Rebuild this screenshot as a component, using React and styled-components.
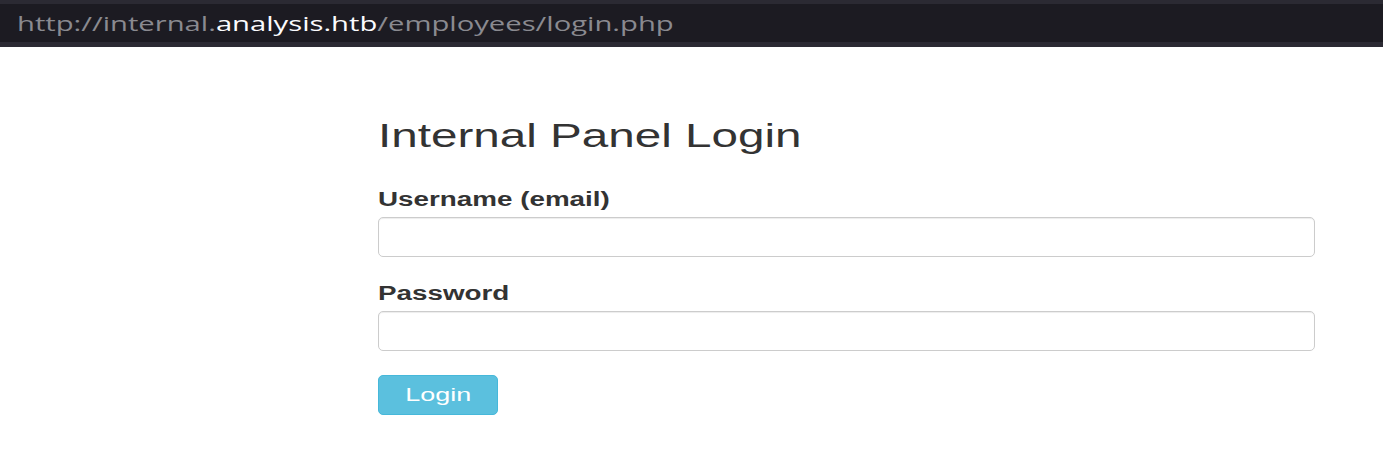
import styled, { createGlobalStyle } from 'styled-components';

const GlobalStyle = createGlobalStyle`
  html, body {
    margin: 0;
    padding: 0;
    background: #ffffff;
  }
  * {
    box-sizing: border-box;
  }
`;

const Page = styled.div`
  width: 1383px;
  height: 465px;
  overflow: hidden;
  background: #ffffff;
`;

// the screenshot is stretched sideways, so text gets a horizontal scale
const Wide = styled.span`
  display: inline-block;
  white-space: nowrap;
  transform: scaleX(${(p) => p.$x || 1.4});
  transform-origin: ${(p) => (p.$center ? 'center' : 'left')} center;
`;

const AddressBar = styled.div`
  height: 47px;
  background: #1c1b22;
  border-top: 4px solid #2b2a33;
  border-bottom: 5px solid #2b2a33;
  display: flex;
  align-items: center;
  padding-left: 17px;
  font-family: "Open Sans", "DejaVu Sans", sans-serif;
  font-size: 20px;
  color: #8a8a90;
  white-space: nowrap;
`;

const Host = styled.span`
  color: #fbfbfe;
`;

const Main = styled.div`
  padding: 68px 0 0 378px;
  width: 1315px;
  font-family: "Liberation Sans", Arial, sans-serif;
  color: #333333;
`;

const Title = styled.h3`
  margin: 0 0 33px;
  font-size: 34px;
  font-weight: 400;
  line-height: 40px;
`;

const Field = styled.div`
  margin-bottom: 25px;
`;

const Label = styled.label`
  display: block;
  font-size: 20px;
  font-weight: 700;
  line-height: 22px;
  margin-bottom: 7px;
`;

const Input = styled.input`
  display: block;
  width: 100%;
  height: 40px;
  padding: 6px 12px;
  border: 1px solid #cccccc;
  border-radius: 5px;
  box-shadow: inset 0 1px 1px rgba(0, 0, 0, 0.075);
  font-size: 19px;
  outline: none;
`;

const Button = styled.button`
  margin-top: -1px;
  width: 120px;
  height: 40px;
  padding: 0;
  background: #5bc0de;
  border: 1px solid #46b8da;
  border-radius: 5px;
  color: #ffffff;
  font-family: "Liberation Sans", Arial, sans-serif;
  font-size: 19px;
  cursor: pointer;
`;

export default function App() {
  return (
    <Page>
      <GlobalStyle />
      <AddressBar>
        <Wide $x={1.46}>
          http://internal.<Host>analysis.htb</Host>/employees/login.php
        </Wide>
      </AddressBar>
      <Main>
        <Title>
          <Wide $x={1.4}>Internal Panel Login</Wide>
        </Title>
        <form>
          <Field>
            <Label htmlFor="username">
              <Wide $x={1.39}>Username (email)</Wide>
            </Label>
            <Input id="username" type="text" />
          </Field>
          <Field>
            <Label htmlFor="password">
              <Wide $x={1.39}>Password</Wide>
            </Label>
            <Input id="password" type="password" />
          </Field>
          <Button type="submit">
            <Wide $x={1.42} $center>Login</Wide>
          </Button>
        </form>
      </Main>
    </Page>
  );
}
